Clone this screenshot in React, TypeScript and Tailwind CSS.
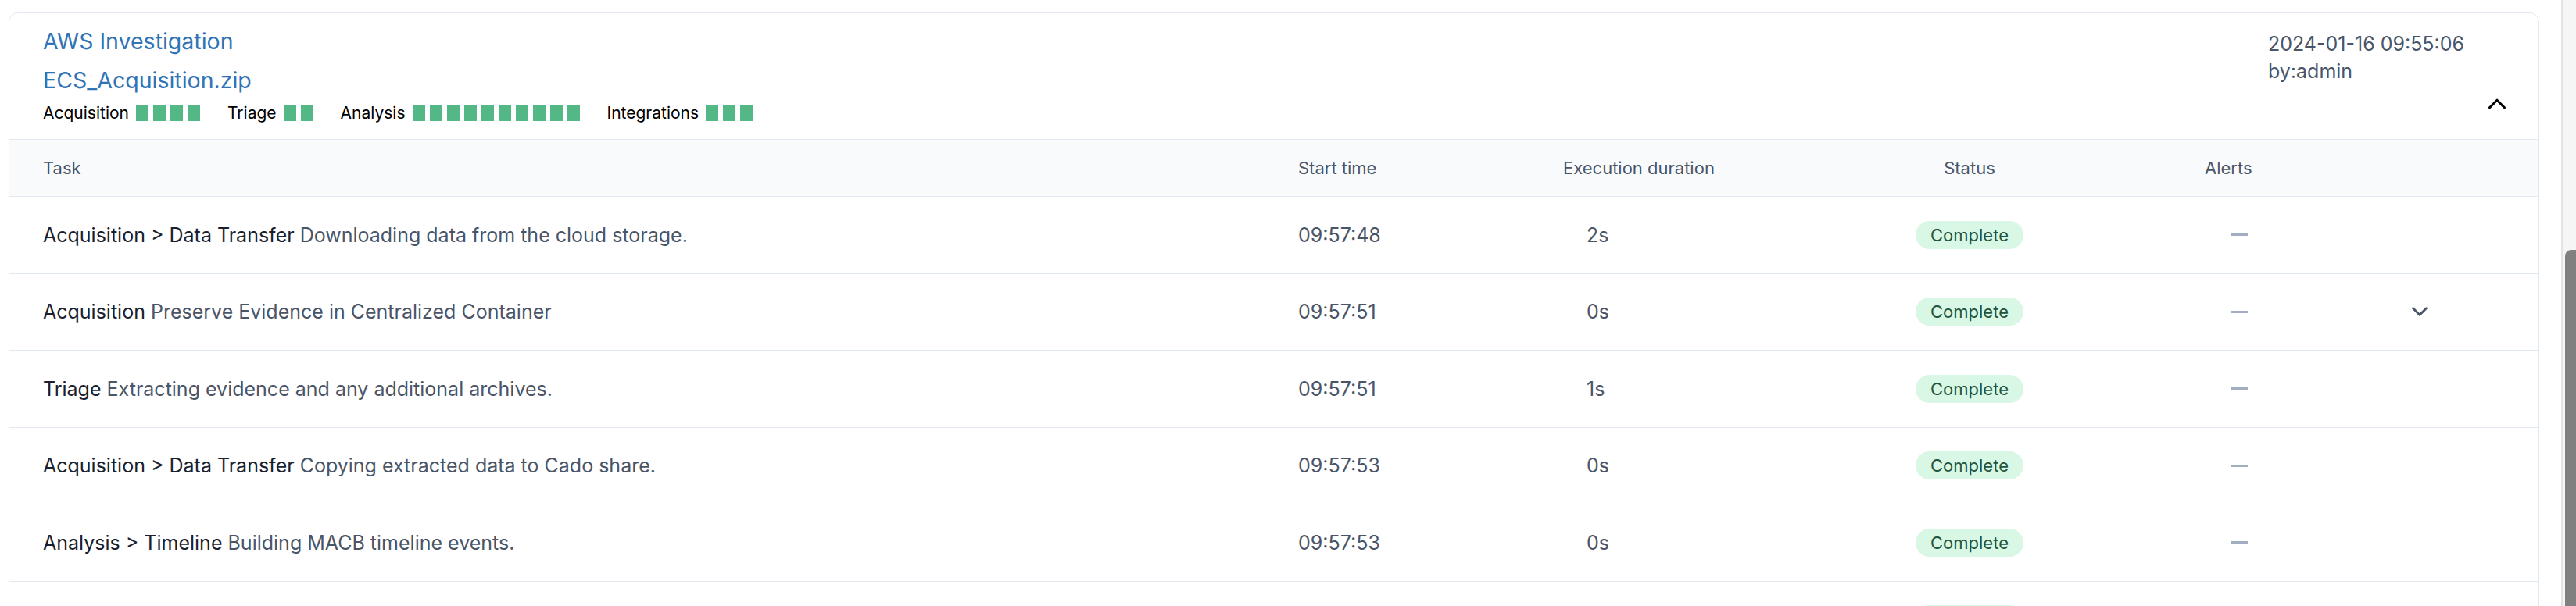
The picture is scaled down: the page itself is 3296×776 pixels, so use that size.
import React from "react";
import { ChevronUp, ChevronDown } from "lucide-react";

interface TaskRow {
  category: string;
  description: string;
  start: string;
  duration: string;
  expandable?: boolean;
}

const stages = [
  { name: "Acquisition", count: 4 },
  { name: "Triage", count: 2 },
  { name: "Analysis", count: 10 },
  { name: "Integrations", count: 3 },
];

const tasks: TaskRow[] = [
  { category: "Acquisition > Data Transfer", description: "Downloading data from the cloud storage.", start: "09:57:48", duration: "2s" },
  { category: "Acquisition", description: "Preserve Evidence in Centralized Container", start: "09:57:51", duration: "0s", expandable: true },
  { category: "Triage", description: "Extracting evidence and any additional archives.", start: "09:57:51", duration: "1s" },
  { category: "Acquisition > Data Transfer", description: "Copying extracted data to Cado share.", start: "09:57:53", duration: "0s" },
  { category: "Analysis > Timeline", description: "Building MACB timeline events.", start: "09:57:53", duration: "0s" },
  { category: "Analysis", description: "Indexing evidence for search.", start: "09:57:54", duration: "3s" },
];

const cols = "grid grid-cols-[1649px_339px_400px_240px_360px_1fr]";

const StageProgress = () => (
  <div className="flex items-center gap-[35px] text-[21px] leading-[30px] text-black">
    {stages.map((s) => (
      <div key={s.name} className="flex items-center">
        <span className="mr-[9px]">{s.name}</span>
        <div className="flex gap-[6px]">
          {Array.from({ length: s.count }).map((_, i) => (
            <div key={i} className="w-[16px] h-[20px] bg-[#53b886]" />
          ))}
        </div>
      </div>
    ))}
  </div>
);

const Row = ({ task }: { task: TaskRow }) => (
  <div className={`${cols} h-[98.5px] items-center border-b border-[#e2e8f0] text-[25px] leading-[36px]`}>
    <div className="pl-[43px] whitespace-nowrap">
      <span className="text-[#1a202c]">{task.category}</span>{" "}
      <span className="text-[#4a5568]">{task.description}</span>
    </div>
    <div className="text-[#4a5568]">{task.start}</div>
    <div className="pl-[30px] text-[#4a5568]">{task.duration}</div>
    <div className="flex justify-center">
      <span className="rounded-full bg-[#d9f7e5] px-[19px] text-[22px] leading-[36px] text-[#22543d]">Complete</span>
    </div>
    <div className="pl-[214px]">
      <div className="w-[22px] h-[3px] bg-[#a0aec0]" />
    </div>
    <div className="pl-[79px] flex items-center">
      {task.expandable && <ChevronDown size={34} strokeWidth={2.1} className="text-[#4a5568]" />}
    </div>
  </div>
);

export default function App() {
  return (
    <div className="flex h-[776px] overflow-hidden bg-white" style={{ fontFamily: "Inter, 'Noto Sans', sans-serif" }}>
      <div className="flex-1 pl-[11px] pr-[28px] pt-[16px]">
        <div className="rounded-[12px] border border-[#e2e8f0] bg-white">
          <div className="flex justify-between">
            <div className="pl-[43px] pt-[11px] pb-[18px]">
              <div className="text-[28.5px] leading-[50px] text-[#3174b5]">AWS Investigation</div>
              <div className="text-[28.5px] leading-[50px] text-[#3174b5]">ECS_Acquisition.zip</div>
              <div className="mt-[2px]">
                <StageProgress />
              </div>
            </div>
            <div className="w-[346px] pr-[42px] pt-[22px] flex flex-col">
              <div className="text-[25px] leading-[35px] text-[#4a5568]">2024-01-16 09:55:06</div>
              <div className="text-[25px] leading-[35px] text-[#4a5568]">by:admin</div>
              <ChevronUp size={38} strokeWidth={2} className="self-end mt-[5px] -mr-[8px] text-black" />
            </div>
          </div>
          <div className={`${cols} h-[74px] items-center border-y border-[#e2e8f0] bg-[#f8fafc] text-[22px] leading-[33px] text-[#4a5568]`}>
            <div className="pl-[43px]">Task</div>
            <div>Start time</div>
            <div>Execution duration</div>
            <div className="text-center">Status</div>
            <div className="pl-[181px]">Alerts</div>
            <div />
          </div>
          {tasks.map((t, i) => (
            <Row key={i} task={t} />
          ))}
        </div>
      </div>
      <div className="w-[19px] border-l-2 border-[#e3e3e3] bg-[#f5f5f5] flex flex-col">
        <div className="mt-[320px] ml-auto w-[14px] flex-1 rounded-tl-[8px] bg-[#808080]" />
      </div>
    </div>
  );
}
